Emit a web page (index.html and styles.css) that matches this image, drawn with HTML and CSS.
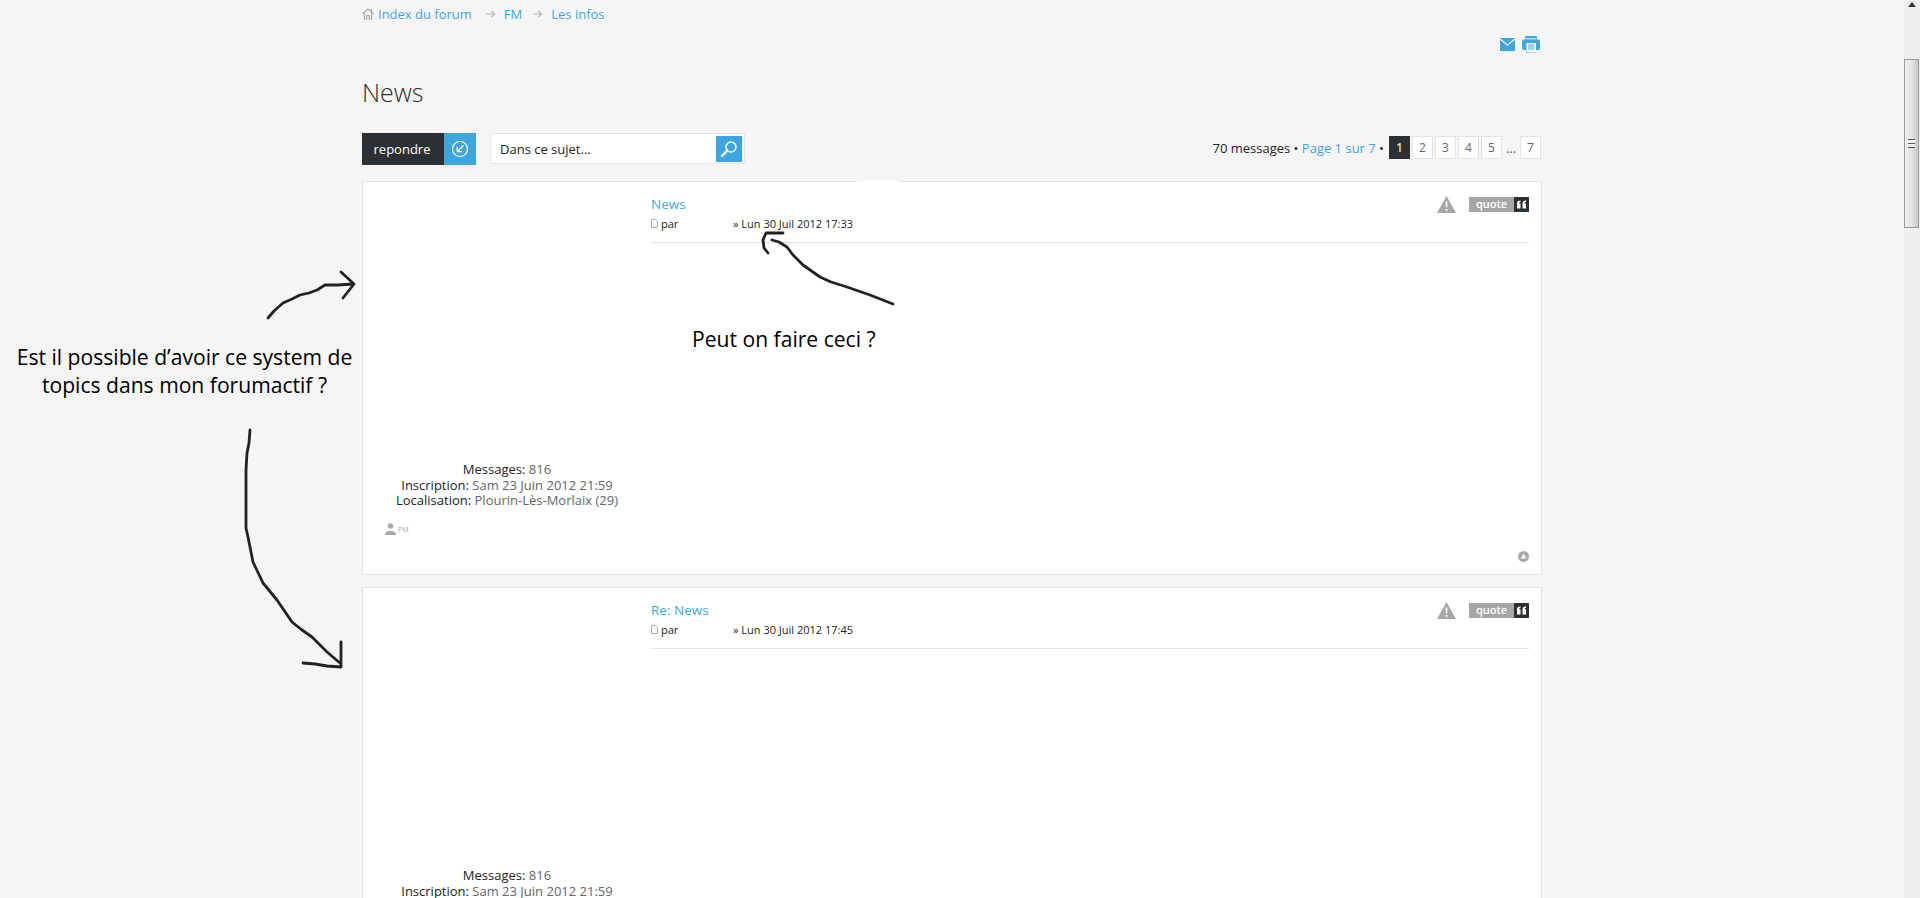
FILE: index.html
```html
<!DOCTYPE html>
<html lang="fr">
<head>
    <meta charset="UTF-8">
    <title>News</title>
    <link rel="stylesheet" href="styles.css">
</head>
<body>
    <div class="page">
        <div class="wrap">
            <nav class="crumbs">
                <svg class="home" width="12" height="12" viewBox="0 0 12 12"><path d="M.5 6 6 1l5.500 5M2.300 5v6h2.500V7.500h2.400V11h2.500V5M8.500 1.500h1.200v2.300" fill="none" stroke="#a9a9a9" stroke-width="1.100"/></svg>
                <a href="#">Index du forum</a>
                <span class="sep"><svg width="11" height="10" viewBox="0 0 12 10"><path d="M1 5h9.500M7 1.500 10.500 5 7 8.500" fill="none" stroke="#b5b5b5" stroke-width="1.200"/></svg></span>
                <a href="#">FM</a>
                <span class="sep short"><svg width="11" height="10" viewBox="0 0 12 10"><path d="M1 5h9.500M7 1.500 10.500 5 7 8.500" fill="none" stroke="#b5b5b5" stroke-width="1.200"/></svg></span>
                <a href="#">Les infos</a>
            </nav>
            <div class="tools">
                <svg width="15" height="13" viewBox="0 0 15 13"><path d="M0 0h15v13H0z" fill="#3fa5df"/><path d="M0 1l7.500 6L15 1" fill="none" stroke="#f5f5f5" stroke-width="1.200"/></svg>
                <svg width="18" height="17" viewBox="0 0 18 17"><path d="M4 0h10a1 1 0 0 1 1 1v2.500h1a2 2 0 0 1 2 2V12a2 2 0 0 1-2 2h-2v3H4v-3H2a2 2 0 0 1-2-2V5.500a2 2 0 0 1 2-2h1V1a1 1 0 0 1 1-1z" fill="#3fa5df"/><path d="M3.500 2.800h11" stroke="#f5f5f5"/><path d="M4.500 7h9.500v9.500H4.500z" fill="#fff"/><path d="M6 9h6.500M6 11h6.500M6 13h6.500" stroke="#3fa5df"/></svg>
            </div>
            <h1 class="title">News</h1>
            <div class="actions">
                <a class="reply" href="#">
                    <span class="reply-text">repondre</span>
                    <span class="reply-icon"><svg width="18" height="18" viewBox="0 0 18 18"><circle cx="9" cy="9" r="7.500" fill="none" stroke="#fff" stroke-width="1.200"/><path d="M12.500 5.500 6.500 11.500M6.300 7v4.700H11" fill="none" stroke="#fff" stroke-width="1.300"/></svg></span>
                </a>
                <div class="search">
                    <span class="search-text">Dans ce sujet...</span>
                    <span class="search-btn"><svg width="18" height="18" viewBox="0 0 18 18"><circle cx="11" cy="7" r="5" fill="none" stroke="#fff" stroke-width="1.500"/><path d="M7.300 10.700 1.500 16.500" stroke="#fff" stroke-width="2.400"/></svg></span>
                </div>
                <div class="pager">
                    <span class="count">70 messages • <a href="#">Page 1 sur 7</a> •</span>
                    <b class="num on">1</b>
                    <a class="num" href="#">2</a>
                    <a class="num" href="#">3</a>
                    <a class="num" href="#">4</a>
                    <a class="num" href="#">5</a>
                    <span class="dots">...</span>
                    <a class="num" href="#">7</a>
                </div>
            </div>

            <article class="post">
                <div class="profile">
                    <p><b>Messages:</b> 816</p>
                    <p><b>Inscription:</b> Sam 23 Juin 2012 21:59</p>
                    <p><b>Localisation:</b> Plourin-Lès-Morlaix (29)</p>
                    <div class="pm">
                        <svg width="11" height="12" viewBox="0 0 11 12"><circle cx="5.500" cy="3" r="2.800" fill="#aaa"/><path d="M0 12c0-3 2-3.500 4-4h3c2 .5 4 1 4 4z" fill="#aaa"/></svg>
                        <span>PM</span>
                    </div>
                </div>
                <div class="content">
                    <div class="post-buttons">
                        <svg class="warn" width="19" height="17" viewBox="0 0 19 17"><path d="M9.500 0 19 17H0z" fill="#a6a6a6"/><path d="M8.500 5.500h2l-.4 6H8.900zM8.600 13h1.800v2H8.600z" fill="#fff"/></svg>
                        <span class="quote"><span>quote</span><svg width="15" height="15" viewBox="0 0 15 15"><path d="M0 0h15v15H0z" fill="#2b3034"/><path d="M3 11.500V6.500C3 4.500 4 3.500 6.500 3.500v1.500c-1 0-1.300.5-1.300 1.500h1.300v5zM8.500 11.500V6.500c0-2 1-3 3.500-3v1.500c-1 0-1.300.5-1.300 1.500H12v5z" fill="#fff"/></svg></span>
                    </div>
                    <h3 class="post-title"><a href="#">News</a></h3>
                    <p class="meta">
                        <svg width="7" height="9" viewBox="0 0 7 9"><path d="M.5.500h4l2 2v6h-6z" fill="none" stroke="#aaa"/></svg>
                        <span class="author">par</span>
                        <span>» Lun 30 Juil 2012 17:33</span>
                    </p>
                    <hr class="rule">
                    <a class="top-link" href="#"><svg width="11" height="11" viewBox="0 0 11 11"><circle cx="5.500" cy="5.500" r="5.500" fill="#a5abb0"/><path d="M5.500 2.800 8.200 7.500H2.800z" fill="#fff"/></svg></a>
                </div>
            </article>

            <article class="post">
                <div class="profile">
                    <p><b>Messages:</b> 816</p>
                    <p><b>Inscription:</b> Sam 23 Juin 2012 21:59</p>
                </div>
                <div class="content">
                    <div class="post-buttons">
                        <svg class="warn" width="19" height="17" viewBox="0 0 19 17"><path d="M9.500 0 19 17H0z" fill="#a6a6a6"/><path d="M8.500 5.500h2l-.4 6H8.900zM8.600 13h1.800v2H8.600z" fill="#fff"/></svg>
                        <span class="quote"><span>quote</span><svg width="15" height="15" viewBox="0 0 15 15"><path d="M0 0h15v15H0z" fill="#2b3034"/><path d="M3 11.500V6.500C3 4.500 4 3.500 6.500 3.500v1.500c-1 0-1.300.5-1.300 1.500h1.300v5zM8.500 11.500V6.500c0-2 1-3 3.500-3v1.500c-1 0-1.300.5-1.300 1.500H12v5z" fill="#fff"/></svg></span>
                    </div>
                    <h3 class="post-title"><a href="#">Re: News</a></h3>
                    <p class="meta">
                        <svg width="7" height="9" viewBox="0 0 7 9"><path d="M.5.500h4l2 2v6h-6z" fill="none" stroke="#aaa"/></svg>
                        <span class="author">par</span>
                        <span>» Lun 30 Juil 2012 17:45</span>
                    </p>
                    <hr class="rule">
                </div>
            </article>
        </div>

        <!-- notes drawn on top of the screenshot -->
        <p class="note note-left">Est il possible d’avoir ce system de<br>topics dans mon forumactif ?</p>
        <p class="note note-right">Peut on faire ceci ?</p>
        <svg class="scribble" width="1904" height="898" viewBox="0 0 1904 898">
            <ellipse class="erase" cx="878" cy="182" rx="22" ry="2"/>
            <path d="M268 318 274 311 283 303 292 299 300 295 309 293 317 290 325 285 338 285 353 284M341 272 354 284 343 298"/>
            <path d="M893 304 870 295 847 287 831 282 820 277 803 265 793 255 787 247 779 242 772 240"/>
            <path d="M783 233 766 233 763 240 764 248 768 253"/>
            <path d="M250 430 249 443 247 453 246 470 246 528 248 537 253 562 263 583 277 600 292 622 302 630 312 637 327 652 340 663"/>
            <path d="M341 642V667L327 666 315 664 303 663"/>
        </svg>
    </div>

    <aside class="scrollbar">
        <svg class="scroll-arrow" width="8" height="5" viewBox="0 0 8 5"><path d="M4 0 8 5H0z" fill="#333"/></svg>
        <div class="thumb"><span class="grip"></span></div>
    </aside>
</body>
</html>
```

FILE: styles.css
```css
html, body { margin: 0; height: 898px; overflow: hidden; }
body { display: flex; background: #f5f5f5; color: #222; font-family: "Open Sans", sans-serif; font-size: 12px; }
a { color: #3fa5df; text-decoration: none; }
p { margin: 0; }

.page { position: relative; flex: 1; height: 898px; overflow: hidden; }
.wrap { width: 1180px; margin: 0 auto; }

.crumbs { display: flex; align-items: center; height: 28px; font-size: 13px; }
.crumbs .home { margin-right: 4px; }
.sep { display: flex; margin: 0 8px 0 13px; }
.sep.short { margin: 0 8px 0 10px; }

.tools { display: flex; justify-content: flex-end; align-items: center; gap: 7px; height: 17px; margin-top: 8px; padding-right: 2px; }

.title { margin: 22px 0 0; height: 58px; font-size: 25px; font-weight: 300; line-height: 34px; color: #2f2f2f; }

.actions { display: flex; align-items: flex-start; height: 48px; }
.reply { display: flex; height: 32px; color: #fff; font-size: 13px; }
.reply-text { display: flex; align-items: center; justify-content: center; width: 82px; padding-right: 2px; box-sizing: border-box; background: #2b3034; }
.reply-icon { display: flex; align-items: center; justify-content: center; width: 32px; background: #3fa5df; }
.search { display: flex; align-items: center; justify-content: space-between; box-sizing: border-box; width: 255px; height: 31px; margin-left: 14px; padding: 0 2px 0 9px; background: #fff; border: 1px solid #e6e6e6; font-size: 13px; }
.search-btn { display: flex; align-items: center; justify-content: center; width: 26px; height: 26px; background: #3fa5df; }

.pager { display: flex; align-items: center; margin-left: auto; height: 23px; margin-top: 3px; padding-right: 1px; font-size: 13px; }
.count { margin-right: 3px; }
.num { display: flex; align-items: center; justify-content: center; box-sizing: border-box; width: 21px; height: 23px; margin-left: 2px; background: #fff; border: 1px solid #e3e3e3; color: #666; font-size: 12px; font-weight: 400; }
.num.on { background: #2b3034; border-color: #2b3034; color: #f6dcae; font-weight: 600; }
.dots { width: 14px; margin-left: 2px; text-align: center; color: #555; }

.post { display: flex; box-sizing: border-box; height: 394px; margin-bottom: 12px; background: #fff; border: 1px solid #e3e3e3; }
.profile { width: 288px; padding-top: 280px; text-align: center; color: #666; font-size: 13px; line-height: 15.500px; }
.profile b { font-weight: 400; color: #222; }
.pm { display: flex; align-items: center; gap: 2px; margin: 13px 0 0 22px; color: #aaa; font-size: 7px; }

.content { position: relative; flex: 1; padding: 13px 12px 0 0; }
.post-buttons { position: absolute; top: 14px; right: 12px; display: flex; align-items: center; gap: 13px; }
.quote { display: flex; height: 15px; background: #a6a6a6; color: #fff; font-size: 11px; font-weight: 600; line-height: 14px; }
.quote span { width: 45px; text-align: center; }
.post-title { margin: 0; font-size: 13.500px; font-weight: 400; line-height: 18px; }
.meta { display: flex; align-items: center; height: 18px; margin-top: 1px; font-size: 11px; }
.meta svg { margin-right: 3px; }
.author { width: 72px; }
.rule { height: 1px; margin: 10px 0 0; border: 0; background: #e3e3e3; }
.top-link { position: absolute; right: 12px; top: 369px; display: flex; }

.note { position: absolute; margin: 0; color: #000; font-size: 21.100px; line-height: 28px; text-align: center; }
.note-left { left: 0; top: 343px; width: 369px; }
.note-right { left: 692px; top: 325px; }
.scribble { position: absolute; left: 0; top: 0; fill: none; stroke: #222; stroke-width: 2.800; stroke-linejoin: round; stroke-linecap: round; }
.scribble .erase { fill: #fff; stroke: none; }

.scrollbar { position: relative; width: 16px; background: #eee; }
.scroll-arrow { position: absolute; left: 4px; top: 2px; }
.thumb { position: absolute; left: 0; top: 59px; display: flex; align-items: center; justify-content: center; box-sizing: border-box; width: 15px; height: 169px; background: linear-gradient(to right, #f0f0f0, #e2e2e2 55%, #c8c8c8); border: 1px solid #999; }
.grip { width: 7px; height: 7px; border-top: 1px solid #555; border-bottom: 1px solid #555; background: linear-gradient(#f0f0f0 40%, #555 40%, #555 60%, #f0f0f0 60%); }
```
